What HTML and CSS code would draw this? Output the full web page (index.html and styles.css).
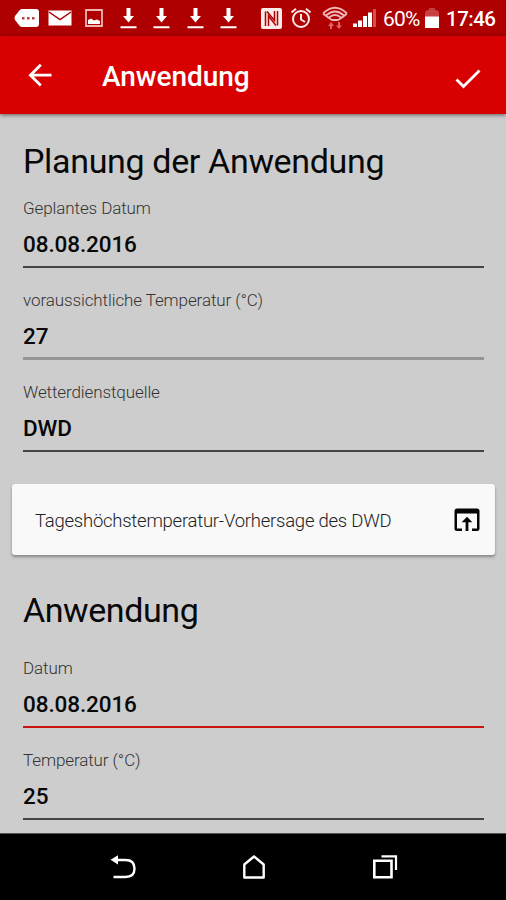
FILE: index.html
```html
<!DOCTYPE html>
<html lang="de">
<head>
<meta charset="utf-8">
<title>Anwendung</title>
<link rel="stylesheet" href="styles.css">
</head>
<body>
<div class="screen">
  <div class="status">
    <div class="notifications">
      <svg width="26" height="20" viewBox="0 0 26 20"><path fill="#fff" d="M8 1h14q3 0 3 3v12q0 3-3 3H8q-2 0-3-2L1 12q-1-2 0-4l4-5q1-2 3-2z"/><path fill="#b84040" d="M8 9h2.500v2.500H8zM13 9h2.500v2.500H13zM18 9h2.500v2.500H18z"/></svg>
      <svg class="mail" width="24" height="16" viewBox="0 0 24 16"><path fill="#fff" d="M.5.500h23v15H.5z"/><path fill="none" stroke="#b00000" stroke-width="1.500" d="m1 2 11 7.500L23 2"/></svg>
      <svg class="picture" width="18" height="18" viewBox="0 0 18 18"><path fill="none" stroke="#f0b4b4" stroke-width="1.800" d="M1 1h16v16H1z"/><path fill="#fff" d="M3 15v-4l3-1.500 3 2 3-1 3 1.500v3z"/></svg>
      <svg class="download" width="17" height="22" viewBox="0 0 17 22"><path fill="#fff" d="M6.500 1h4v8H14l-5.500 6.500L3 9h3.500zM.5 19.300h16v2H.5z"/></svg>
      <svg class="download" width="17" height="22" viewBox="0 0 17 22"><path fill="#fff" d="M6.500 1h4v8H14l-5.500 6.500L3 9h3.500zM.5 19.300h16v2H.5z"/></svg>
      <svg class="download" width="17" height="22" viewBox="0 0 17 22"><path fill="#fff" d="M6.500 1h4v8H14l-5.500 6.500L3 9h3.500zM.5 19.300h16v2H.5z"/></svg>
      <svg class="download" width="17" height="22" viewBox="0 0 17 22"><path fill="#fff" d="M6.500 1h4v8H14l-5.500 6.500L3 9h3.500zM.5 19.300h16v2H.5z"/></svg>
    </div>
    <div class="system">
      <svg width="21" height="21" viewBox="0 0 21 21"><rect width="21" height="21" rx="2" fill="#fbeaea"/><path fill="none" stroke="#b00000" stroke-width="1.500" d="M4.500 18V3.500M7.500 18V8l7.500 9.500M16.500 3v14.500M13.500 3v9.500L6 3.500"/></svg>
      <svg class="alarm" width="22" height="22" viewBox="0 0 22 22"><g fill="none" stroke="#fbeaea" stroke-width="2"><circle cx="11" cy="12" r="8"/><path d="M1.500 5.500 6 1.800M20.500 5.500 16 1.800M11 7v5.500l4 2.500"/></g></svg>
      <svg class="wifi" width="26" height="24" viewBox="0 0 26 24"><g fill="none" stroke="#f0b8b8" stroke-width="1.800"><path d="M1 7.500Q13-4 25 7.500M4 9.500q9-8 18 0M7 11.500q6-5 12 0M1 7.500q5.500 4.500 9 6.500h6q4-2 9-6.500"/></g><path fill="#d66" d="m6 20 3-4 3 4h-2v3H8v-3zM14 19.500h2V16h2v3.500h2L17 23z"/></svg>
      <svg class="signal" width="25" height="20" viewBox="0 0 25 20"><path fill="#fff" d="M1 15.500h4V19H1zM6 12.500h4V19H6zM11 8h4v11h-4zM16 4.500h4V19h-4z"/><path fill="#d05050" d="M21 1h3v18h-3z"/></svg>
      <span class="percent">60%</span>
      <svg class="battery" width="14" height="20" viewBox="0 0 14 20"><path fill="#c84040" d="M4 0h6v2h2l2 2v5H0V4l2-2h2z"/><path fill="#fff" d="M0 8.500h14V20H0z"/></svg>
      <span class="clock">17:46</span>
    </div>
  </div>
  <header class="appbar">
    <svg width="24" height="24" viewBox="0 0 24 24"><path fill="none" stroke="#fff" stroke-width="2.800" d="M23.500 12.200H3M12.800 1.800 2.400 12.200l10.400 10.400"/></svg>
    <h1>Anwendung</h1>
    <svg class="check" width="26" height="20" viewBox="0 0 26 20"><path fill="none" stroke="#fff" stroke-width="2.800" d="m1.500 10.500 7 7L24.500 1.500"/></svg>
  </header>
  <main>
    <h2>Planung der Anwendung</h2>
    <div class="field"><div class="label">Geplantes Datum</div><div class="value">08.08.2016</div></div>
    <div class="field muted"><div class="label">voraussichtliche Temperatur (°C)</div><div class="value">27</div></div>
    <div class="field"><div class="label">Wetterdienstquelle</div><div class="value">DWD</div></div>
    <div class="card">
      <span>Tageshöchstemperatur-Vorhersage des DWD</span>
      <svg width="26" height="24" viewBox="0 0 26 24"><path fill="#050505" d="M3 .5h20Q25.500.500 25.500 3v17.500Q25.500 23 23 23h-5v-2.500h5V5.500H3v15h5V23H3Q.5 23 .5 20.500V3Q.5.500 3 .500z"/><path fill="#050505" d="m13 8.800 5.300 5.400h-3.900V23h-2.800v-8.800H7.700z"/></svg>
    </div>
    <h2 class="apply">Anwendung</h2>
    <div class="field active"><div class="label">Datum</div><div class="value">08.08.2016</div></div>
    <div class="field"><div class="label">Temperatur (°C)</div><div class="value">25</div></div>
  </main>
  <nav>
    <svg width="26" height="26" viewBox="0 0 26 26"><path fill="none" stroke="#fff" stroke-width="2.400" d="M6 6h9.500q9 0 9 8.500t-9 8.500H3.500"/><path fill="#fff" d="M8 1.300v9.200L.5 5.800z"/></svg>
    <svg width="22" height="26" viewBox="0 0 22 26"><path fill="none" stroke="#fff" stroke-width="2.400" stroke-linejoin="round" d="M1.300 23.500V10.500L11 2.500l9.700 8v13z"/></svg>
    <svg width="26" height="26" viewBox="0 0 26 26"><path fill="none" stroke="#fff" stroke-width="2.600" d="M2.300 6.800h17.200v16.500H2.300z"/><path fill="none" stroke="#fff" stroke-width="2.200" d="M9.500 2.300H24V16"/></svg>
  </nav>
</div>
</body>
</html>
```
FILE: styles.css
```css
* { box-sizing: border-box; }
body { margin: 0; font-family: Roboto, "Liberation Sans", sans-serif; }
svg { display: block; flex: none; }
.screen { width: 506px; height: 900px; display: flex; flex-direction: column; overflow: hidden; background: #cdcdcd; }
.status { height: 36px; flex: none; background: #ae0000; display: flex; justify-content: space-between; padding: 0 11px 0 14px; color: #fff; }
.notifications, .system { display: flex; align-items: center; }
.mail { margin-left: 8px; }
.picture { margin-left: 13px; }
.download { margin-left: 16.600px; }
.alarm { margin-left: 8px; }
.wifi { margin-left: 10px; }
.signal { margin-left: 4px; }
.percent { width: 37px; margin-left: 6px; font-size: 21px; line-height: 36px; padding-top: 2px; letter-spacing: -.8px; white-space: nowrap; }
.battery { margin-left: 5px; }
.clock { width: 49px; margin-left: 7px; font-size: 20.500px; font-weight: 500; padding-top: 2px; letter-spacing: -.5px; white-space: nowrap; }
.appbar { height: 78px; flex: none; background: #d80000; display: flex; align-items: center; padding: 0 25px 0 28px; color: #fff; box-shadow: 0 1px 4px rgba(0,0,0,.55); z-index: 1; }
.appbar h1 { margin: 3px 0 0 50px; font-size: 28px; line-height: 36px; font-weight: 500; letter-spacing: -.05px; white-space: nowrap; }
.check { margin: 7px 0 0 auto; }
main { flex: 1; min-height: 0; padding-top: 32px; color: #080808; }
h2 { margin: 0 23px; font-size: 34px; line-height: 30px; font-weight: 400; letter-spacing: -.34px; white-space: nowrap; }
.field { height: 92px; margin: 0 22px 0 23px; padding-top: 20px; border-bottom: 2px solid #444; }
.muted { border-bottom: 3px solid #959595; }
.active { border-bottom-color: #cb1515; }
.label { font-size: 17px; line-height: 24px; font-weight: 300; letter-spacing: -.1px; color: #333; white-space: nowrap; }
.value { font-size: 22.500px; line-height: 48px; font-weight: 500; letter-spacing: -.1px; white-space: nowrap; }
.card { height: 71px; margin: 32px 11px 0 12px; padding: 0 15px 0 23px; display: flex; align-items: center; justify-content: space-between; background: #f9f9f9; border-radius: 3px; box-shadow: 0 2px 3px rgba(0,0,0,.35); font-size: 18.500px; font-weight: 300; letter-spacing: -.24px; color: #222; white-space: nowrap; }
.card span { padding-top: 2px; }
.apply { margin-top: 40px; margin-bottom: 11px; letter-spacing: -.42px; }
nav { height: 67px; flex: none; background: #000; border-top: 1px solid #555; display: flex; justify-content: space-between; padding: 20px 108px 0 110px; }
```
